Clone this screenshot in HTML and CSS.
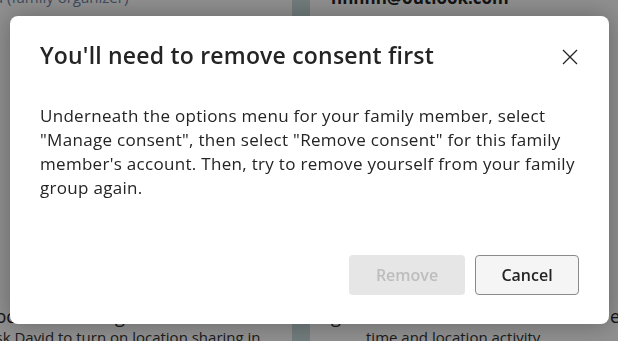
FILE: index.html
```html
<!DOCTYPE html>
<html lang="en">
<head>
    <meta charset="UTF-8">
    <meta name="viewport" content="width=device-width, initial-scale=1.0">
    <title>Family - Remove consent</title>
    <link rel="stylesheet" href="styles.css">
</head>
<body>
    <!-- Page behind the dialog -->
    <div class="page">
        <div class="col col-left">
            <p class="member-role">Hanna (family organizer) <span class="more">&middot;</span></p>
            <div class="card-bottom">
                <p class="card-heading">Location sharing is off</p>
                <p class="card-text">Ask David to turn on location sharing in</p>
            </div>
        </div>
        <div class="divider"></div>
        <div class="col col-right">
            <p class="member-email">hhhhh@outlook.com</p>
            <div class="card-bottom">
                <p class="card-heading split"><span>g</span><span>e</span></p>
                <p class="card-text indent">time and location activity</p>
            </div>
        </div>
    </div>

    <!-- Dialog -->
    <div class="overlay">
        <div class="dialog" role="dialog" aria-labelledby="dialogTitle">
            <div class="dialog-header">
                <h2 id="dialogTitle">You'll need to remove consent first</h2>
                <button class="close" aria-label="Close">
                    <svg width="16" height="16" viewBox="0 0 16 16">
                        <path d="M1 1 L15 15 M15 1 L1 15" stroke="#242424" stroke-width="1.3" fill="none"/>
                    </svg>
                </button>
            </div>
            <p class="dialog-body">Underneath the options menu for your family member, select<br>"Manage consent", then select "Remove consent" for this family<br>member's account. Then, try to remove yourself from your family<br>group again.</p>
            <div class="dialog-footer">
                <button class="btn btn-primary" disabled>Remove</button>
                <button class="btn btn-default">Cancel</button>
            </div>
        </div>
    </div>
</body>
</html>
```

FILE: styles.css
```css
:root {
    --text: #242424;
    --muted: #616161;
    --border: #8a8a8a;
}

* {
    margin: 0;
    padding: 0;
    box-sizing: border-box;
}

body {
    font-family: 'Open Sans', 'Noto Sans', sans-serif;
    color: var(--text);
    background: white;
    overflow: hidden;
}

/* Page behind */
.page {
    display: grid;
    grid-template-columns: 292px 18px 1fr;
    height: 341px;
}

.col {
    display: flex;
    flex-direction: column;
    justify-content: space-between;
    overflow: hidden;
    white-space: nowrap;
}

.col-left {
    margin-left: -14px;
}

.col-right {
    padding-left: 21px;
}

.divider {
    background: #c9dcdc;
}

.member-role {
    font-size: 15px;
    color: #6f86a8;
    margin-top: -13px;
    margin-left: -29px;
}

.more {
    color: var(--text);
    font-weight: 700;
    margin-left: 129px;
}

.member-email {
    font-size: 17px;
    font-weight: 700;
    margin-top: -14px;
}

.card-heading {
    font-size: 18px;
    line-height: 22px;
}

.split {
    display: flex;
    justify-content: space-between;
    margin-right: -2px;
}

.card-text {
    font-size: 15px;
    line-height: 20px;
    margin-bottom: -6px;
    color: #333;
}

.indent {
    padding-left: 35px;
}

/* Dialog */
.overlay {
    position: fixed;
    inset: 0;
    background: rgba(0, 0, 0, 0.44);
    padding: 16px 9px 17px 10px;
}

.dialog {
    background: white;
    border-radius: 8px;
    box-shadow: 0 0 24px rgba(0, 0, 0, 0.3);
    height: 100%;
    padding: 23px 30px 29px;
    display: flex;
    flex-direction: column;
}

.dialog-header {
    display: flex;
    justify-content: space-between;
    align-items: flex-start;
}

.dialog-header h2 {
    font-size: 23px;
    font-weight: 600;
    line-height: 32px;
    letter-spacing: 0.2px;
}

.close {
    border: none;
    background: none;
    width: 16px;
    height: 16px;
    margin-top: 10px;
    margin-right: 1px;
    cursor: pointer;
}

.dialog-body {
    margin-top: 33px;
    font-size: 17px;
    line-height: 24px;
    letter-spacing: 0.3px;
    white-space: nowrap;
}

.dialog-footer {
    margin-top: auto;
    display: flex;
    justify-content: flex-end;
    gap: 10px;
}

.btn {
    width: 116px;
    height: 40px;
    border-radius: 4px;
    font-family: inherit;
    font-size: 16px;
    font-weight: 600;
}

.btn-primary {
    background: #e6e6e6;
    border: none;
    color: #bdbdbd;
}

.btn-default {
    background: #f5f5f5;
    border: 1px solid var(--border);
    color: var(--text);
    width: 104px;
    cursor: pointer;
}
```
